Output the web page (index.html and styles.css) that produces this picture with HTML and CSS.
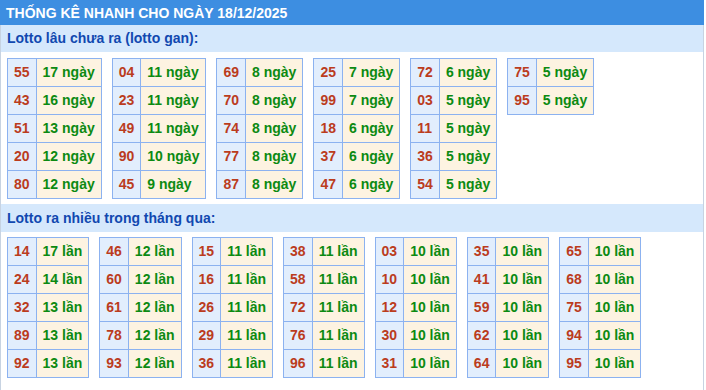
FILE: index.html
```html
<!DOCTYPE html>
<html lang="vi">
<head>
<meta charset="utf-8">
<title>Thống kê nhanh</title>
<link rel="stylesheet" href="styles.css">
</head>
<body>
<div class="box">
  <div class="head">THỐNG KÊ NHANH CHO NGÀY 18/12/2025</div>
  <div class="sec-title">Lotto lâu chưa ra (lotto gan):</div>
  <div class="grid">
    <table class="t"><tr><td class="n">55</td><td class="v">17 ngày</td></tr><tr><td class="n">43</td><td class="v">16 ngày</td></tr><tr><td class="n">51</td><td class="v">13 ngày</td></tr><tr><td class="n">20</td><td class="v">12 ngày</td></tr><tr><td class="n">80</td><td class="v">12 ngày</td></tr></table>
    <table class="t"><tr><td class="n">04</td><td class="v">11 ngày</td></tr><tr><td class="n">23</td><td class="v">11 ngày</td></tr><tr><td class="n">49</td><td class="v">11 ngày</td></tr><tr><td class="n">90</td><td class="v">10 ngày</td></tr><tr><td class="n">45</td><td class="v">9 ngày</td></tr></table>
    <table class="t"><tr><td class="n">69</td><td class="v">8 ngày</td></tr><tr><td class="n">70</td><td class="v">8 ngày</td></tr><tr><td class="n">74</td><td class="v">8 ngày</td></tr><tr><td class="n">77</td><td class="v">8 ngày</td></tr><tr><td class="n">87</td><td class="v">8 ngày</td></tr></table>
    <table class="t"><tr><td class="n">25</td><td class="v">7 ngày</td></tr><tr><td class="n">99</td><td class="v">7 ngày</td></tr><tr><td class="n">18</td><td class="v">6 ngày</td></tr><tr><td class="n">37</td><td class="v">6 ngày</td></tr><tr><td class="n">47</td><td class="v">6 ngày</td></tr></table>
    <table class="t"><tr><td class="n">72</td><td class="v">6 ngày</td></tr><tr><td class="n">03</td><td class="v">5 ngày</td></tr><tr><td class="n">11</td><td class="v">5 ngày</td></tr><tr><td class="n">36</td><td class="v">5 ngày</td></tr><tr><td class="n">54</td><td class="v">5 ngày</td></tr></table>
    <table class="t"><tr><td class="n">75</td><td class="v">5 ngày</td></tr><tr><td class="n">95</td><td class="v">5 ngày</td></tr></table>
  </div>
  <div class="sec-title sec2">Lotto ra nhiều trong tháng qua:</div>
  <div class="grid">
    <table class="t"><tr><td class="n">14</td><td class="v">17 lần</td></tr><tr><td class="n">24</td><td class="v">14 lần</td></tr><tr><td class="n">32</td><td class="v">13 lần</td></tr><tr><td class="n">89</td><td class="v">13 lần</td></tr><tr><td class="n">92</td><td class="v">13 lần</td></tr></table>
    <table class="t"><tr><td class="n">46</td><td class="v">12 lần</td></tr><tr><td class="n">60</td><td class="v">12 lần</td></tr><tr><td class="n">61</td><td class="v">12 lần</td></tr><tr><td class="n">78</td><td class="v">12 lần</td></tr><tr><td class="n">93</td><td class="v">12 lần</td></tr></table>
    <table class="t"><tr><td class="n">15</td><td class="v">11 lần</td></tr><tr><td class="n">16</td><td class="v">11 lần</td></tr><tr><td class="n">26</td><td class="v">11 lần</td></tr><tr><td class="n">29</td><td class="v">11 lần</td></tr><tr><td class="n">36</td><td class="v">11 lần</td></tr></table>
    <table class="t"><tr><td class="n">38</td><td class="v">11 lần</td></tr><tr><td class="n">58</td><td class="v">11 lần</td></tr><tr><td class="n">72</td><td class="v">11 lần</td></tr><tr><td class="n">76</td><td class="v">11 lần</td></tr><tr><td class="n">96</td><td class="v">11 lần</td></tr></table>
    <table class="t"><tr><td class="n">03</td><td class="v">10 lần</td></tr><tr><td class="n">10</td><td class="v">10 lần</td></tr><tr><td class="n">12</td><td class="v">10 lần</td></tr><tr><td class="n">30</td><td class="v">10 lần</td></tr><tr><td class="n">31</td><td class="v">10 lần</td></tr></table>
    <table class="t"><tr><td class="n">35</td><td class="v">10 lần</td></tr><tr><td class="n">41</td><td class="v">10 lần</td></tr><tr><td class="n">59</td><td class="v">10 lần</td></tr><tr><td class="n">62</td><td class="v">10 lần</td></tr><tr><td class="n">64</td><td class="v">10 lần</td></tr></table>
    <table class="t"><tr><td class="n">65</td><td class="v">10 lần</td></tr><tr><td class="n">68</td><td class="v">10 lần</td></tr><tr><td class="n">75</td><td class="v">10 lần</td></tr><tr><td class="n">94</td><td class="v">10 lần</td></tr><tr><td class="n">95</td><td class="v">10 lần</td></tr></table>
  </div>
</div>
</body>
</html>
```
FILE: styles.css
```css
html, body {
  margin: 0;
  padding: 0;
  background: #ffffff;
  font-family: "Liberation Sans", Arial, sans-serif;
}
.box {
  width: 702px;
  border-left: 1px solid #c7d3e2;
  border-right: 1px solid #c7d3e2;
  padding-bottom: 20px;
}
.head {
  height: 25px;
  line-height: 26px;
  background: #3d8ee1;
  color: #ffffff;
  font-weight: bold;
  font-size: 14px;
  padding-left: 6px;
  margin-left: -1px;
  margin-right: -1px;
}
.sec-title {
  height: 27px;
  line-height: 27px;
  background: #d5e8fc;
  color: #1148b0;
  font-weight: bold;
  font-size: 14px;
  padding-left: 6px;
}
.sec2 {
  height: 28px;
  line-height: 28px;
  margin-top: 5px;
}
.grid {
  display: flex;
  flex-wrap: wrap;
  align-items: flex-start;
  gap: 10px;
  padding: 5px 0 0 6px;
}
.sec-title + .grid {
  padding-top: 6px;
}
.sec2 + .grid {
  padding-top: 5px;
}
.t {
  border-collapse: collapse;
  font-size: 14px;
  font-weight: bold;
}
.t td {
  border: 1px solid #8cb2f0;
  height: 17px;
  line-height: 17px;
  padding: 5px 6px;
  white-space: nowrap;
}
.t .n {
  background: #e2eefd;
  color: #bb3c1d;
}
.t .v {
  background: #fdf3e1;
  color: #0c8a12;
}
```
